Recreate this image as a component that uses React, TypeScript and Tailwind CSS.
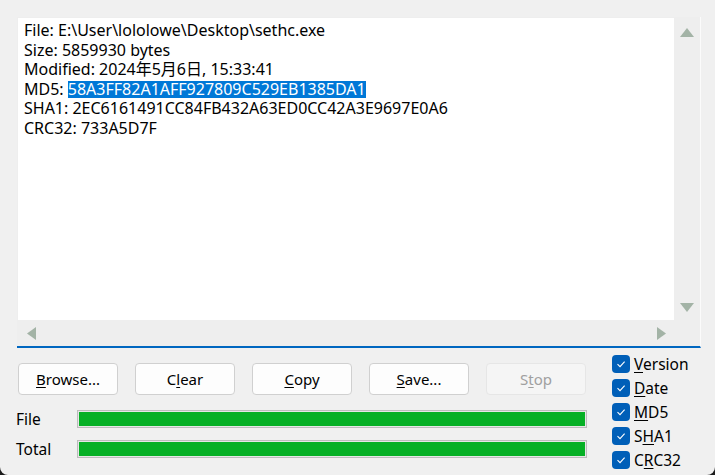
import React from "react";

const font = { fontFamily: '"Noto Sans", "Noto Sans CJK SC", sans-serif' };

function Btn({ u, rest, pre = "", disabled = false }: { u: string; rest: string; pre?: string; disabled?: boolean }) {
  return (
    <div
      className={
        "w-[100px] h-[32px] rounded-[4px] border flex items-center justify-center text-[15px] " +
        (disabled ? "bg-[#f5f5f5] border-[#e6e6e6] text-[#a0a0a0]" : "bg-[#fdfdfd] border-[#d0d0d0] text-black")
      }
    >
      <span>
        {pre}
        <span className="underline underline-offset-2">{u}</span>
        {rest}
      </span>
    </div>
  );
}

function Check({ pre = "", u, rest }: { pre?: string; u: string; rest: string }) {
  return (
    <div className="flex items-center h-[24px] gap-[4px]">
      <div className="w-[18px] h-[18px] rounded-[4px] bg-[#005fb8] flex items-center justify-center">
        <svg width="12" height="12" viewBox="0 0 12 12">
          <path d="M2.5 6.2 L5 8.6 L9.6 3.6" fill="none" stroke="white" strokeWidth="1.1" />
        </svg>
      </div>
      <span className="text-[15.5px] leading-[20px] text-black">
        {pre}
        <span className="underline underline-offset-2">{u}</span>
        {rest}
      </span>
    </div>
  );
}

function Bar() {
  return (
    <div className="w-[510px] h-[18px] border border-[#bcbcbc] bg-[#e6e6e6] p-px">
      <div className="w-full h-full bg-[#06b025]" />
    </div>
  );
}

export default function App() {
  return (
    <div className="w-[715px] h-[475px] bg-[#1c1c1c]" style={font}>
      <div className="w-full h-full bg-[#f0f0f0] rounded-b-[8px] pt-[17px] overflow-hidden">
        {/* output box */}
        <div className="ml-[17px] w-[684px] h-[331px] bg-[#eeeeee] pl-px pt-px border-r border-r-[#fbfbfb] border-b-2 border-b-[#0067c0]">
          <div className="grid grid-cols-[656px_26px] grid-rows-[302px_26px]">
            <div className="bg-white pl-[6px] pt-[3px] text-[16px] leading-[19.5px] text-black">
              <div>File: E:\User\lololowe\Desktop\sethc.exe</div>
              <div>Size: 5859930 bytes</div>
              <div>Modified: 2024年5月6日, 15:33:41</div>
              <div>
                MD5:{" "}
                <span className="inline-block align-top mt-[1px] h-[17px] leading-[17px] bg-[#0078d7] text-white">
                  58A3FF82A1AFF927809C529EB1385DA1
                </span>
              </div>
              <div>SHA1: 2EC6161491CC84FB432A63ED0CC42A3E9697E0A6</div>
              <div>CRC32: 733A5D7F</div>
            </div>
            <div className="flex flex-col items-center justify-between pt-[10px] pb-[8px]">
              <svg width="14" height="10" viewBox="0 0 14 10"><path d="M7 0 L14 9 L0 9 Z" fill="#a3b3a6" /></svg>
              <svg width="14" height="10" viewBox="0 0 14 10"><path d="M0 1 L14 1 L7 10 Z" fill="#a3b3a6" /></svg>
            </div>
            <div className="flex items-center justify-between pl-[9px] pr-[8px]">
              <svg width="10" height="13" viewBox="0 0 10 13"><path d="M0 6.5 L9 0 L9 13 Z" fill="#a3b3a6" /></svg>
              <svg width="10" height="13" viewBox="0 0 10 13"><path d="M10 6.5 L1 0 L1 13 Z" fill="#a3b3a6" /></svg>
            </div>
            <div />
          </div>
        </div>

        {/* controls */}
        <div className="flex mt-[4px]">
          <div className="ml-[16px] pt-[11px]">
            <div className="flex gap-[17px] ml-[2px]">
              <Btn u="B" rest="rowse..." />
              <Btn pre="C" u="l" rest="ear" />
              <Btn u="C" rest="opy" />
              <Btn u="S" rest="ave..." />
              <Btn pre="S" u="t" rest="op" disabled />
            </div>
            <div className="mt-[15px] flex flex-col gap-[12px] text-[15.5px] text-black">
              <div className="flex items-center h-[18px]">
                <span className="w-[61px] leading-[18px]">File</span>
                <Bar />
              </div>
              <div className="flex items-center h-[18px]">
                <span className="w-[61px] leading-[18px]">Total</span>
                <Bar />
              </div>
            </div>
          </div>
          <div className="ml-[25px] flex flex-col">
            <Check u="V" rest="ersion" />
            <Check u="D" rest="ate" />
            <Check u="M" rest="D5" />
            <Check pre="S" u="H" rest="A1" />
            <Check pre="C" u="R" rest="C32" />
          </div>
        </div>
      </div>
    </div>
  );
}
